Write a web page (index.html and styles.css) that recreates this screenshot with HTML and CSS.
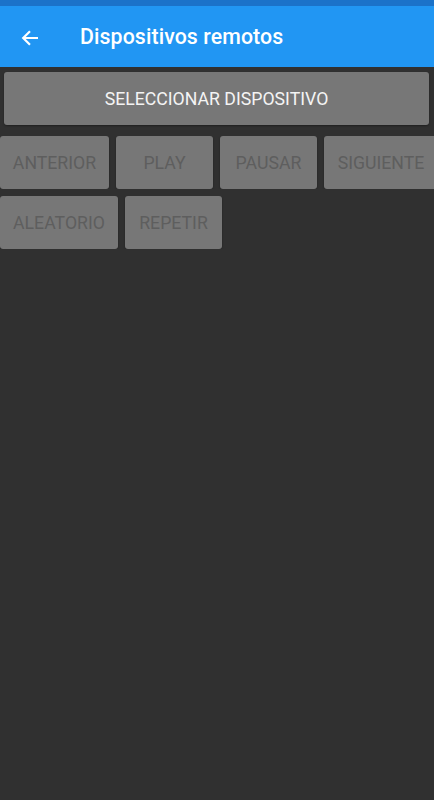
FILE: index.html
```html
<!DOCTYPE html>
<html lang="es">
<head>
<meta charset="utf-8">
<title>Dispositivos remotos</title>
<link rel="stylesheet" href="styles.css">
</head>
<body>
<div class="statusbar"></div>
<header class="appbar">
  <button class="back" aria-label="Atrás">
    <svg width="18" height="18" viewBox="0 0 18 18"><path d="M17 9H2.5M9 2.2L2.2 9L9 15.8" fill="none" stroke="#fff" stroke-width="2.2"/></svg>
  </button>
  <h1 class="title">Dispositivos remotos</h1>
</header>
<main class="content">
  <button class="btn btn-main">SELECCIONAR DISPOSITIVO</button>
  <div class="row">
    <button class="btn btn-off w109">ANTERIOR</button>
    <button class="btn btn-off">PLAY</button>
    <button class="btn btn-off">PAUSAR</button>
    <button class="btn btn-off w114">SIGUIENTE</button>
  </div>
  <div class="row">
    <button class="btn btn-off w118">ALEATORIO</button>
    <button class="btn btn-off">REPETIR</button>
  </div>
</main>
</body>
</html>
```
FILE: styles.css
```css
html, body {
  margin: 0;
  padding: 0;
  background: #303030;
  font-family: Roboto, "Noto Sans", sans-serif;
  width: 434px;
  height: 800px;
  overflow: hidden;
}
.statusbar {
  height: 6px;
  background: #1b72c9;
}
.appbar {
  height: 61px;
  background: #2196f3;
  display: flex;
  align-items: center;
  box-sizing: border-box;
  padding-left: 21px;
}
.back {
  background: none;
  border: 0;
  padding: 0;
  width: 18px;
  height: 18px;
  display: flex;
  margin-top: 2px;
}
.title {
  margin: 0 0 0 41px;
  color: #fff;
  font-size: 21.3px;
  font-weight: 500;
  letter-spacing: 0.1px;
}
.content {
  display: flex;
  flex-direction: column;
}
.btn {
  font-family: Roboto, sans-serif;
  font-weight: 400;
  border: 0;
  border-radius: 3px;
  background: #777777;
  height: 53px;
  font-size: 17.7px;
  padding: 0 12px;
  box-shadow: 0 1px 2px rgba(0,0,0,0.35);
  flex: none;
}
.btn-main {
  margin: 5px 5px 0 4px;
  color: #f4f4f4;
}
.row {
  display: flex;
  gap: 7px;
  margin-top: 11px;
  overflow: hidden;
}
.row + .row {
  margin-top: 7px;
}
.btn-off {
  color: #5e5e5e;
  width: 97px;
}
.w109 { width: 109px; }
.w114 { width: 114px; }
.w118 { width: 118px; }
```
